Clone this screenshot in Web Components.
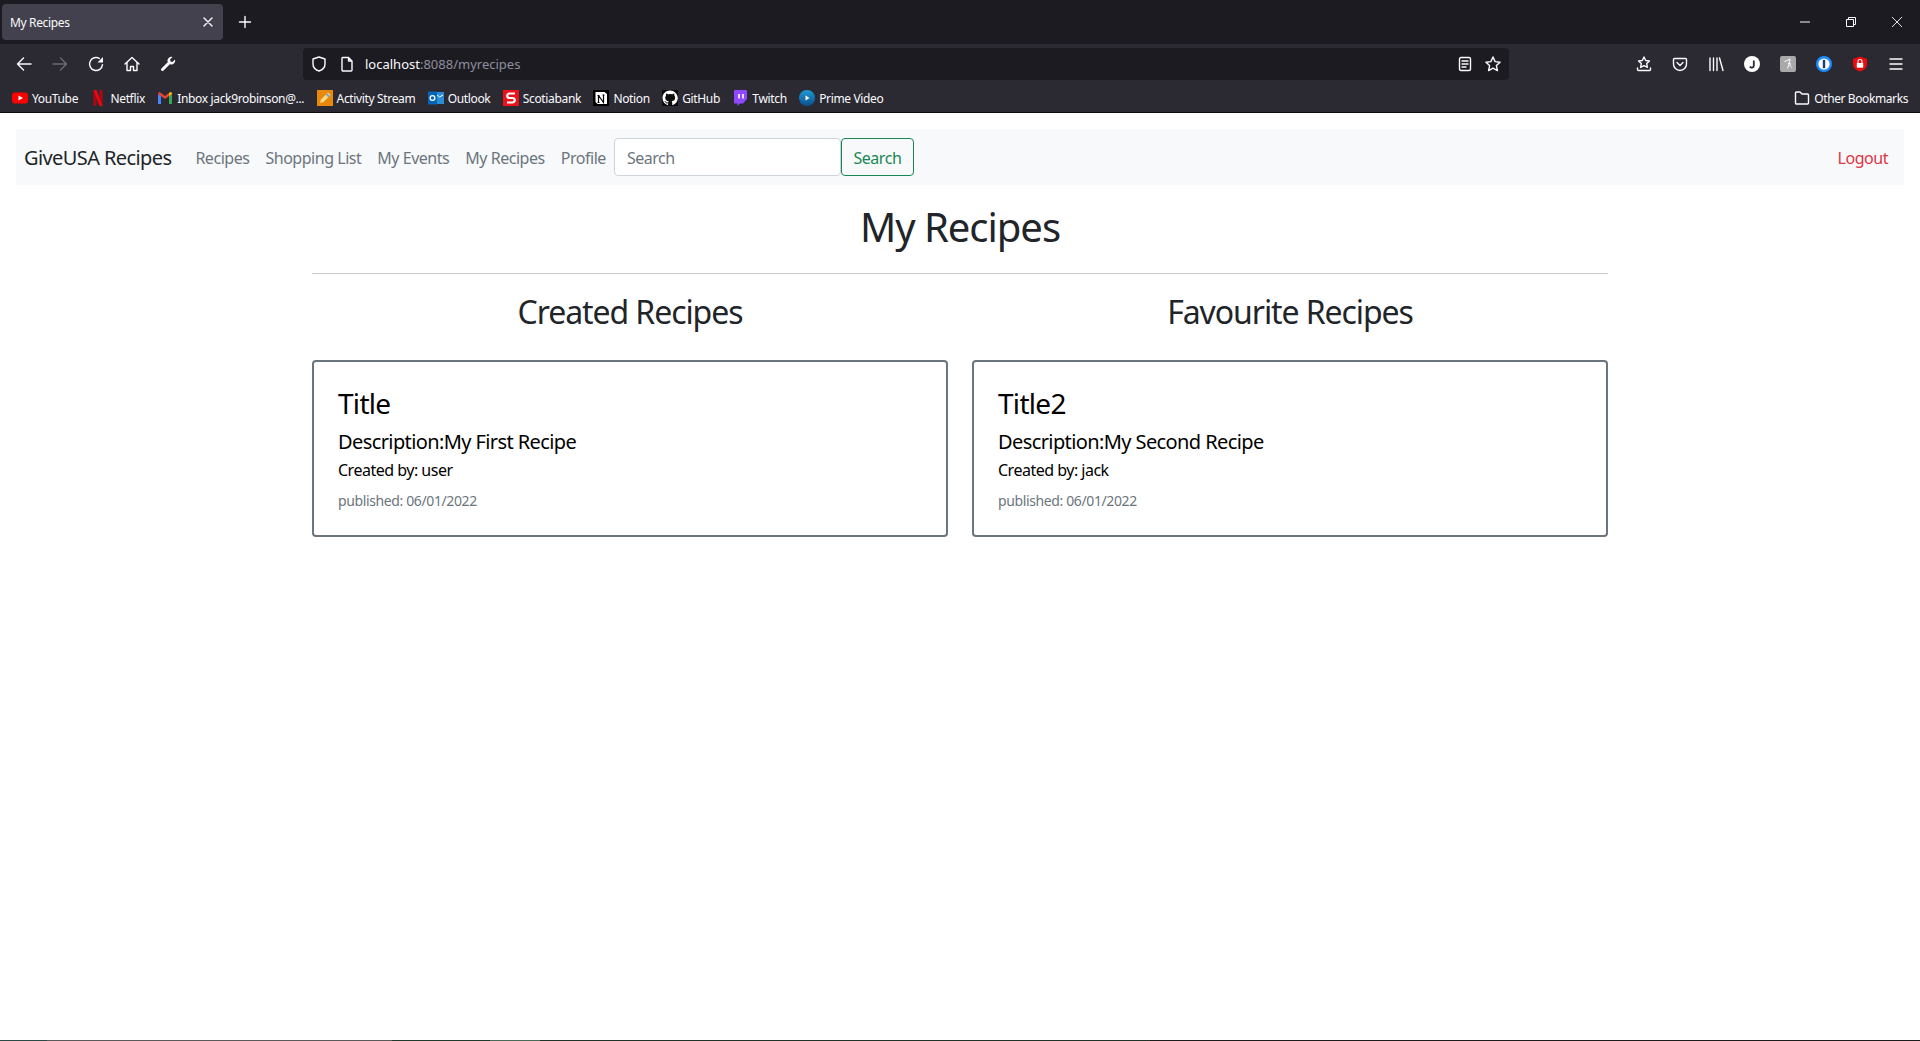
<!DOCTYPE html>
<html>
<head>
<meta charset="utf-8">
<title>My Recipes</title>
<style>
  html, body { margin: 0; padding: 0; background: #fff; }
  body { font-family: "Noto Sans", "Open Sans", sans-serif; height: 1041px; overflow: hidden; display: flex; flex-direction: column; }
</style>
</head>
<body>
<browser-chrome></browser-chrome>
<site-navbar></site-navbar>
<page-main>
  <recipe-card slot="created" heading="Title" description="Description:My First Recipe" author="user" published="06/01/2022"></recipe-card>
  <recipe-card slot="favourite" heading="Title2" description="Description:My Second Recipe" author="jack" published="06/01/2022"></recipe-card>
</page-main>
<task-strip></task-strip>

<template id="bookmarkTemplate">
  <style>
    :host { display: inline-flex; align-items: center; gap: 4px; color: #fbfbfe; font-size: 12px; letter-spacing: -0.35px; height: 16px; white-space: nowrap; }
    ::slotted(svg) { width: 16px; height: 16px; flex: none; }
  </style>
  <slot name="icon"></slot><span><slot></slot></span>
</template>

<script>
const ICON_STROKE = 'fill="none" stroke="#fbfbfe" stroke-width="1.4" stroke-linecap="round" stroke-linejoin="round"';

class BookmarkItem extends HTMLElement {
  constructor() {
    super();
    this.attachShadow({ mode: 'open' });
    this.shadowRoot.appendChild(document.getElementById('bookmarkTemplate').content.cloneNode(true));
  }
}

class BrowserChrome extends HTMLElement {
  constructor() {
    super();
    this.attachShadow({ mode: 'open' });
    this.shadowRoot.innerHTML = `
    <style>
      :host { display: block; flex: none; color: #fbfbfe; background: #2b2a33; }
      svg { display: block; flex: none; }
      .tabbar { height: 44px; background: #1c1b22; display: flex; align-items: center; }
      .tab { margin-left: 2px; width: 221px; height: 36px; box-sizing: border-box; background: #42414d; border-radius: 4px; display: flex; align-items: center; justify-content: space-between; padding: 0 10px 0 8px; font-size: 12px; letter-spacing: -0.35px; }
      .newtab { margin-left: 15px; }
      .winctl { margin-left: auto; display: flex; align-items: center; }
      .winctl span { width: 46px; display: flex; justify-content: center; }
      .toolbar { height: 40px; display: flex; align-items: center; }
      .nav { display: flex; align-items: center; gap: 20px; padding-left: 16px; width: 288px; box-sizing: border-box; flex: none; }
      .url { margin-left: 15px; width: 1206px; height: 32px; box-sizing: border-box; background: #1c1b22; border-radius: 4px; display: flex; align-items: center; padding: 0 8px; flex: none; }
      .url .addr { margin-left: 10px; font-size: 13px; letter-spacing: 0; }
      .url .addr i { font-style: normal; color: #8f8f9d; }
      .url .end { margin-left: auto; display: flex; gap: 12px; align-items: center; }
      .tools { margin-left: auto; display: flex; align-items: center; gap: 20px; padding-right: 16px; }
      .bookmarks { height: 28px; display: flex; align-items: center; padding-left: 12px; gap: 12.4px; border-bottom: 1px solid #0c0c0d; }
      .bookmarks .other { margin-left: auto; margin-right: 12px; letter-spacing: -0.4px; }
    </style>
    <div class="tabbar">
      <div class="tab"><span>My Recipes</span>
        <svg width="10" height="10" viewBox="0 0 10 10"><path d="M1 1l8 8M9 1l-8 8" ${ICON_STROKE} stroke-width="1"/></svg>
      </div>
      <svg class="newtab" width="14" height="14" viewBox="0 0 14 14"><path d="M7 1.500v11M1.500 7h11" ${ICON_STROKE} stroke-width="1.300"/></svg>
      <div class="winctl">
        <span><svg width="12" height="12" viewBox="0 0 12 12"><path d="M1 6h10" stroke="#fbfbfe" fill="none"/></svg></span>
        <span><svg width="12" height="12" viewBox="0 0 12 12"><path d="M1.500 3.500h7v7h-7zM3.500 3.500v-2h7v7h-2" stroke="#fbfbfe" fill="none"/></svg></span>
        <span><svg width="12" height="12" viewBox="0 0 12 12"><path d="M1 1l10 10M11 1l-10 10" stroke="#fbfbfe" fill="none" stroke-width=".9"/></svg></span>
      </div>
    </div>
    <div class="toolbar">
      <div class="nav">
        <svg width="16" height="16" viewBox="0 0 16 16"><path d="M15 8H1.500M7.500 2L1.500 8l6 6" ${ICON_STROKE} stroke-width="1.200"/></svg>
        <svg width="16" height="16" viewBox="0 0 16 16"><path d="M1 8h13.500M8.500 2l6 6-6 6" ${ICON_STROKE} stroke-width="1.200" style="stroke:#6b6a72"/></svg>
        <svg width="16" height="16" viewBox="0 0 16 16"><path d="M14.500 8.600A6.500 6.500 0 1 1 11.500 2.500" ${ICON_STROKE}/><path d="M15 1v5.500H9.500z" fill="#fbfbfe"/></svg>
        <svg width="16" height="16" viewBox="0 0 16 16"><path d="M1 8l7-6.500L15 8M3 6.500V14.500h3.500v-4h3v4H13V6.500" ${ICON_STROKE} stroke-width="1.200"/></svg>
        <svg width="16" height="16" viewBox="0 0 16 16"><path d="M2.500 13.500l6-6" stroke="#fbfbfe" stroke-width="3" stroke-linecap="round" fill="none"/><path d="M7.500 5.500A4 4 0 0 1 12.500 1l-2.500 2.500.5 2 2 .5L15 3.500A4 4 0 0 1 10.500 8.500z" fill="#fbfbfe"/></svg>
      </div>
      <div class="url">
        <svg width="16" height="16" viewBox="0 0 16 16"><path d="M8 1l6 2v5c0 3.500-3 6-6 7-3-1-6-3.500-6-7V3z" ${ICON_STROKE}/></svg>
        <svg style="margin-left:12px" width="16" height="16" viewBox="0 0 16 16"><path d="M3.500 1.500h6L13 5v9a1 1 0 0 1-1 1H4a1 1 0 0 1-1-1V2zM9.500 1.500V5H13" ${ICON_STROKE}/></svg>
        <span class="addr">localhost<i>:8088/myrecipes</i></span>
        <div class="end">
          <svg width="16" height="16" viewBox="0 0 16 16"><rect x="2.500" y="1.500" width="11" height="13" rx="1.500" ${ICON_STROKE}/><path d="M5 5h6M5 8h6M5 11h4" ${ICON_STROKE}/></svg>
          <svg width="16" height="16" viewBox="0 0 16 16"><path d="M8 1l2.100 4.600 5 .6-3.700 3.400 1 5L8 12.100 3.600 14.600l1-5L.9 6.200l5-.6z" ${ICON_STROKE}/></svg>
        </div>
      </div>
      <div class="tools">
        <svg width="16" height="16" viewBox="0 0 16 16"><path d="M8 1l1.700 3.500 3.800.5-2.800 2.600.7 3.800L8 9.600l-3.400 1.800.7-3.800L2.500 5l3.800-.5z" ${ICON_STROKE} stroke-width="1.200"/><path d="M1.500 12v1.500a1 1 0 0 0 1 1h11a1 1 0 0 0 1-1V12" ${ICON_STROKE} stroke-width="1.200"/></svg>
        <svg width="16" height="16" viewBox="0 0 16 16"><path d="M2.500 2.500h11a1 1 0 0 1 1 1V8a6.500 6.500 0 0 1-13 0V3.500a1 1 0 0 1 1-1z" ${ICON_STROKE} stroke-width="1.200"/><path d="M5 6.500L8 9.500l3-3" ${ICON_STROKE} stroke-width="1.200"/></svg>
        <svg width="16" height="16" viewBox="0 0 16 16"><path d="M2 2v12.500M5.500 2v12.500M9 2v12.500M11.500 2L15 14.500" ${ICON_STROKE} stroke-width="1.200"/></svg>
        <svg width="16" height="16" viewBox="0 0 16 16"><circle cx="8" cy="8" r="8" fill="#fff"/><path d="M9.800 4.500v5a2 2 0 0 1-3.800 1" stroke="#2b2a33" stroke-width="1.800" fill="none"/></svg>
        <svg width="16" height="16" viewBox="0 0 16 16"><rect width="16" height="16" rx="2" fill="#a9a9a9"/><path d="M4.500 5.500C7 5 9 3.500 10 3c0 3-1.500 7-2.500 9.500M8 7.500c3-1 3 1 2 2 .5 1 1 1.500 1.500 2" stroke="#fff" fill="none"/></svg>
        <svg width="16" height="16" viewBox="0 0 16 16"><circle cx="8" cy="8" r="6.800" fill="#fff" stroke="#1a8cff" stroke-width="2.400"/><rect x="6.800" y="3.800" width="2.400" height="8.400" fill="#1c3d6e"/></svg>
        <svg width="16" height="16" viewBox="0 0 16 16"><path d="M8 .5l7 2.500v5c0 4-3.500 6.500-7 7.500-3.500-1-7-3.500-7-7.500V3z" fill="#ee0b0b"/><rect x="4.800" y="7" width="6.400" height="4.800" rx=".6" fill="#fff"/><path d="M6 7V5.500a2 2 0 0 1 4 0V7" stroke="#fff" stroke-width="1.100" fill="none"/></svg>
        <svg width="16" height="16" viewBox="0 0 16 16"><path d="M2 3h12M2 8h12M2 13h12" ${ICON_STROKE} stroke-linecap="butt"/></svg>
      </div>
    </div>
    <div class="bookmarks">
      <bookmark-item><svg slot="icon" viewBox="0 0 16 16"><rect y="2.500" width="16" height="11" rx="3" fill="#f00"/><path d="M6.500 5.500v5L11 8z" fill="#fff"/></svg>YouTube</bookmark-item>
      <bookmark-item><svg slot="icon" viewBox="0 0 16 16"><path d="M3.500 0h3l3 9V0h3v16c-1 0-2-.2-3-.3L6.500 7v8.500l-3 .5z" fill="#b1060f"/><path d="M3.500 0h3l6 16-3-.3z" fill="#e50914"/></svg>Netflix</bookmark-item>
      <bookmark-item><svg slot="icon" viewBox="0 0 16 16"><path d="M1 14V4l3 2v8z" fill="#4285f4"/><path d="M12 14V6l3-2v10z" fill="#34a853"/><path d="M1 4l7 5 7-5-1-2-1 .300L8 6 3 2.300 2 2z" fill="#ea4335"/><path d="M12 6l3-2V3l-1.500-1L12 3z" fill="#fbbc04"/></svg>Inbox jack9robinson@...</bookmark-item>
      <bookmark-item><svg slot="icon" viewBox="0 0 16 16"><rect width="16" height="16" fill="#e8890c"/><path d="M3 13l1-3.500 7-7 2.500 2.500-7 7z" fill="#f6d98a"/><path d="M9.500 4l2.500 2.500" stroke="#6aa7d8" stroke-width="2"/></svg>Activity Stream</bookmark-item>
      <bookmark-item><svg slot="icon" viewBox="0 0 16 16"><rect x="6" y="2" width="10" height="12" fill="#2a8dd8"/><path d="M9 5l2.500 2L15 5" stroke="#fff" fill="none"/><rect y="1.500" width="9" height="13" fill="#0364b8"/><circle cx="4.500" cy="8" r="2.400" fill="none" stroke="#fff" stroke-width="1.300"/></svg>Outlook</bookmark-item>
      <bookmark-item><svg slot="icon" viewBox="0 0 16 16"><rect width="16" height="16" fill="#ec111a"/><path d="M12 3.500H6.500a2.200 2.200 0 0 0 0 4.500h3a2.200 2.200 0 0 1 0 4.500H4" stroke="#fff" stroke-width="2.200" fill="none"/></svg>Scotiabank</bookmark-item>
      <bookmark-item><svg slot="icon" viewBox="0 0 16 16"><rect width="16" height="16" rx="1" fill="#000"/><path d="M2.500 2h9l2.500 2v10H4.500L2.500 12z" fill="#fff"/><path d="M5.500 12.500V5.500M5.500 5.500l5 7V5M4.500 5.500h2M9.500 5h2M4.500 12.500h2" stroke="#000" stroke-width="1.200" fill="none"/></svg>Notion</bookmark-item>
      <bookmark-item><svg slot="icon" viewBox="0 0 16 16"><rect width="16" height="16" fill="#0d0d0d"/><path fill="#fff" d="M8 .500C3.800.500.500 3.800.500 8c0 3.300 2.100 6.100 5.100 7.100.4.100.500-.200.500-.400v-1.400c-1.900.400-2.400-.500-2.500-.900-.100-.200-.500-.900-.800-1-.300-.200-.600-.500 0-.500.600 0 1 .500 1.200.800.700 1.100 1.700.800 2.200.600.100-.500.300-.800.500-1-1.700-.200-3.400-.800-3.400-3.700 0-.800.300-1.500.800-2-.100-.200-.300-1 .100-2 0 0 .600-.200 2.100.800.600-.200 1.200-.300 1.900-.300s1.300.100 1.900.300c1.400-1 2.100-.800 2.100-.800.400 1 .100 1.800.100 2 .500.500.800 1.200.800 2 0 2.900-1.700 3.500-3.400 3.700.300.200.500.700.500 1.400v2c0 .200.100.500.500.400 3-1 5.100-3.800 5.100-7.100C15.500 3.800 12.200.500 8 .500z"/></svg>GitHub</bookmark-item>
      <bookmark-item><svg slot="icon" viewBox="0 0 16 16"><path d="M2 1a1 1 0 0 1 1-1h11a1 1 0 0 1 1 1v8l-4 4.500H8L5.500 16v-2.500H3a1 1 0 0 1-1-1z" fill="#9146ff"/><path d="M7 4v4.500M11 4v4.500" stroke="#fff" stroke-width="1.600"/></svg>Twitch</bookmark-item>
      <bookmark-item><svg slot="icon" viewBox="0 0 16 16"><defs><linearGradient id="pv" x1="0" y1="0" x2="0" y2="1"><stop offset="0" stop-color="#1e9ad6"/><stop offset="1" stop-color="#0a4f8c"/></linearGradient></defs><circle cx="8" cy="8" r="8" fill="url(#pv)"/><path d="M6.500 5.500v5L10.500 8z" fill="#fff"/></svg>Prime Video</bookmark-item>
      <bookmark-item class="other"><svg slot="icon" viewBox="0 0 16 16"><path d="M1.500 3a1 1 0 0 1 1-1h3.500l2 2h5.500a1 1 0 0 1 1 1v8a1 1 0 0 1-1 1h-11a1 1 0 0 1-1-1z" ${ICON_STROKE} stroke-width="1.100"/></svg>Other Bookmarks</bookmark-item>
    </div>`;
  }
}

class SiteNavbar extends HTMLElement {
  constructor() {
    super();
    this.attachShadow({ mode: 'open' });
    this.shadowRoot.innerHTML = `
    <style>
      :host { display: flex; flex: none; align-items: center; height: 56px; margin: 16px 16px 0; padding: 0 12px 0 8px; background: #f8f9fa; box-sizing: border-box; font-size: 16px; letter-spacing: -0.47px; }
      .brand { font-size: 20px; color: #212529; margin-right: 16px; letter-spacing: -0.6px; padding-top: 1px; }
      a { color: #6c757d; padding: 2px 8px 0; text-decoration: none; white-space: nowrap; }
      form { display: flex; margin: 0; }
      input { width: 227px; height: 38px; box-sizing: border-box; border: 1px solid #ced4da; border-radius: 4px; background: #fff; padding: 2px 12px 0; font: inherit; letter-spacing: inherit; color: #212529; outline: none; }
      input::placeholder { color: #6c757d; opacity: 1; }
      button { width: 73px; height: 38px; box-sizing: border-box; border: 1px solid #198754; border-radius: 4px; background: transparent; color: #198754; font: inherit; letter-spacing: inherit; padding: 2px 0 0; }
      .logout { margin-left: auto; color: #dc3545; padding: 2px 4px 0; }
    </style>
    <span class="brand">GiveUSA Recipes</span>
    <a>Recipes</a><a>Shopping List</a><a>My Events</a><a>My Recipes</a><a>Profile</a>
    <form><input placeholder="Search"><button type="button">Search</button></form>
    <a class="logout">Logout</a>`;
  }
}

class PageMain extends HTMLElement {
  constructor() {
    super();
    this.attachShadow({ mode: 'open' });
    this.shadowRoot.innerHTML = `
    <style>
      :host { display: block; width: 1296px; margin: 0 auto; color: #212529; }
      h1 { margin: 0; padding-top: 18px; height: 76px; box-sizing: border-box; font-size: 40px; font-weight: 400; line-height: 48px; text-align: center; letter-spacing: -1.03px; }
      hr { margin: 12px 0 0; border: 0; border-top: 1px solid #c6c7c8; }
      .cols { display: grid; grid-template-columns: 636px 636px; column-gap: 24px; }
      h2 { margin: 0; padding-top: 19px; height: 86px; box-sizing: border-box; font-size: 32px; font-weight: 400; line-height: 38px; text-align: center; letter-spacing: -1.08px; }
    </style>
    <h1>My Recipes</h1>
    <hr>
    <div class="cols">
      <section><h2>Created Recipes</h2><slot name="created"></slot></section>
      <section><h2>Favourite Recipes</h2><slot name="favourite"></slot></section>
    </div>`;
  }
}

class RecipeCard extends HTMLElement {
  constructor() {
    super();
    this.attachShadow({ mode: 'open' });
    this.shadowRoot.innerHTML = `
    <style>
      :host { display: block; height: 177px; box-sizing: border-box; border: 2px solid #6c757d; border-radius: 4px; padding: 24px; color: #000; letter-spacing: -0.5px; }
      .title { font-size: 28px; line-height: 34px; letter-spacing: -0.7px; }
      .desc { font-size: 20px; line-height: 24px; margin-top: 10px; letter-spacing: -0.6px; }
      .by { font-size: 16px; line-height: 24px; margin-top: 4px; }
      .pub { font-size: 14px; line-height: 20px; margin-top: 9px; color: #6c757d; letter-spacing: -0.38px; }
    </style>
    <div class="title"></div><div class="desc"></div><div class="by"></div><div class="pub"></div>`;
  }

  connectedCallback() {
    this.shadowRoot.querySelector('.title').textContent = this.getAttribute('heading');
    this.shadowRoot.querySelector('.desc').textContent = this.getAttribute('description');
    this.shadowRoot.querySelector('.by').textContent = 'Created by: ' + this.getAttribute('author');
    this.shadowRoot.querySelector('.pub').textContent = 'published: ' + this.getAttribute('published');
  }
}

// 1px sliver of the OS taskbar that shows at the very bottom of the capture
class TaskStrip extends HTMLElement {
  constructor() {
    super();
    this.attachShadow({ mode: 'open' });
    this.shadowRoot.innerHTML = `
    <style>
      :host { display: block; flex: none; height: 1px; margin-top: auto; background: linear-gradient(90deg, #2a4a45 0 47px, #5a5a5a 47px 392px, #1f3a2a 392px 490px, #4a6a58 490px 540px, #1f3328 540px 1150px, #1c1c1c 1150px); }
    </style>`;
  }
}

customElements.define('bookmark-item', BookmarkItem);
customElements.define('browser-chrome', BrowserChrome);
customElements.define('site-navbar', SiteNavbar);
customElements.define('page-main', PageMain);
customElements.define('recipe-card', RecipeCard);
customElements.define('task-strip', TaskStrip);
</script>
</body>
</html>
